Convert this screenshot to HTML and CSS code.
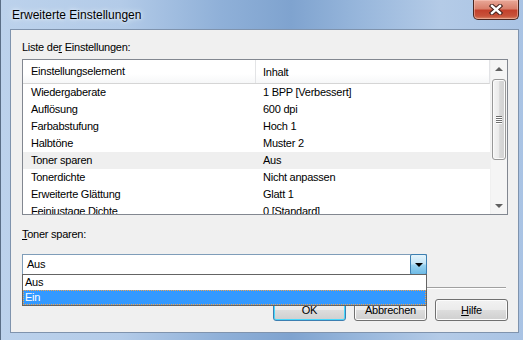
FILE: index.html
```html
<!DOCTYPE html>
<html lang="de">
<head>
<meta charset="utf-8">
<title>Erweiterte Einstellungen</title>
<link rel="stylesheet" href="styles.css">
</head>
<body>
<div class="window">
  <div class="titlebar">
    <span class="title">Erweiterte Einstellungen</span>
    <div class="close">
      <svg width="14" height="11" viewBox="0 0 14 11">
        <path d="M3 2 L11 9 M11 2 L3 9" stroke="#43201a" stroke-width="4.4" stroke-linecap="square" fill="none"/>
        <path d="M3 2 L11 9 M11 2 L3 9" stroke="#ffffff" stroke-width="2.4" stroke-linecap="square" fill="none"/>
      </svg>
    </div>
  </div>
  <div class="client">
    <div class="label">Liste de<u>r</u> Einstellungen:</div>
    <div class="listbox">
      <div class="lv">
        <div class="lv-head">
          <div class="c1">Einstellungselement</div>
          <div class="c2">Inhalt</div>
        </div>
        <div class="lv-body">
          <div class="row"><div class="c1">Wiedergaberate</div><div class="c2">1 BPP [Verbessert]</div></div>
          <div class="row"><div class="c1">Auflösung</div><div class="c2">600 dpi</div></div>
          <div class="row"><div class="c1">Farbabstufung</div><div class="c2">Hoch 1</div></div>
          <div class="row"><div class="c1">Halbtöne</div><div class="c2">Muster 2</div></div>
          <div class="row selected"><div class="c1">Toner sparen</div><div class="c2">Aus</div></div>
          <div class="row"><div class="c1">Tonerdichte</div><div class="c2">Nicht anpassen</div></div>
          <div class="row"><div class="c1">Erweiterte Glättung</div><div class="c2">Glatt 1</div></div>
          <div class="row"><div class="c1">Feinjustage Dichte</div><div class="c2">0 [Standard]</div></div>
        </div>
      </div>
      <div class="vscroll">
        <div class="sb-btn"><span class="tri tri-up"></span></div>
        <div class="sb-track">
          <div class="thumb"><span class="grip"></span><span class="grip"></span><span class="grip"></span><span class="grip"></span></div>
        </div>
        <div class="sb-btn"><span class="tri tri-down"></span></div>
      </div>
    </div>
    <div class="label label2"><u>T</u>oner sparen:</div>
    <div class="combo">
      <div class="combo-text">Aus</div>
      <div class="combo-btn"><span class="tri-combo"></span></div>
      <div class="popup">
        <div class="opt">Aus</div>
        <div class="opt sel">Ein</div>
      </div>
    </div>
    <div class="sep"></div>
    <div class="buttons">
      <div class="btn default">OK</div>
      <div class="btn">Abbrechen</div>
      <div class="btn"><u>H</u>ilfe</div>
    </div>
  </div>
</div>
</body>
</html>
```

FILE: styles.css
```css
* { box-sizing: border-box; }

html, body {
  margin: 0;
  padding: 0;
  background: #c3d7ee;
}

.window {
  width: 523px;
  height: 340px;
  overflow: hidden;
  background:
    linear-gradient(90deg, #bcd2ec 0px, #b3cbe8 120px, #8fb0d8 220px, #7fa3cf 290px, #98b7dc 360px, #b4cbe7 440px, #a9c3e4 523px);
  border-left: 1px solid #5a6e86;
  font-family: "Liberation Sans", Arial, sans-serif;
  font-size: 11px;
  letter-spacing: -0.25px;
  color: #000;
}

.titlebar {
  height: 29px;
  display: flex;
  justify-content: space-between;
  align-items: flex-start;
  padding-left: 11px;
  padding-right: 4px;
}

.title {
  font-size: 12px;
  letter-spacing: 0;
  line-height: 14px;
  margin-top: 8px;
  color: #000;
  text-shadow: 0 0 6px #eaf2fb, 0 0 3px #eaf2fb;
}

.close {
  width: 46px;
  height: 20px;
  border: 1px solid #4a2620;
  border-top: none;
  border-radius: 0 0 5px 5px;
  background: linear-gradient(180deg, #e9a898 0%, #d9806c 45%, #c3412c 55%, #c8533b 85%, #d88a6a 100%);
  box-shadow: inset 0 0 0 1px rgba(255, 210, 200, 0.45);
  display: flex;
  align-items: center;
  justify-content: center;
}

.close svg { display: block; }

.client {
  margin-left: 9px;
  width: 509px;
  height: 304px;
  background: #f0f0f0;
  border: 1px solid #7f93ad;
  padding: 11px 10px 0 11px;
}

.label {
  line-height: 13px;
  height: 13px;
}

.listbox {
  margin-top: 5px;
  height: 156px;
  border: 1px solid #828790;
  background: #fff;
  display: flex;
}

.lv {
  flex: 1;
  display: flex;
  flex-direction: column;
  min-width: 0;
}

.lv-head {
  height: 24px;
  display: flex;
  align-items: center;
  background: linear-gradient(180deg, #ffffff 0%, #ffffff 60%, #f6f7f8 100%);
  border-bottom: 1px solid #d5d5d5;
  border-right: 1px solid #e2e3e6;
}

.lv-head .c1 {
  border-right: 1px solid #e3e4e6;
  height: 23px;
  line-height: 23px;
}

.c1 {
  width: 233px;
  padding-left: 8px;
  white-space: nowrap;
}

.c2 {
  flex: 1;
  padding-left: 7px;
  white-space: nowrap;
}

.lv-body {
  flex: 1;
  overflow: hidden;
}

.row {
  height: 17px;
  line-height: 17px;
  display: flex;
}

.row.selected {
  background: #efefef;
}

.vscroll {
  width: 17px;
  display: flex;
  flex-direction: column;
  background: #f5f5f5;
  border-left: 1px solid #f0f0f0;
}

.sb-btn {
  height: 17px;
  display: flex;
  align-items: center;
  justify-content: center;
}

.tri {
  width: 0;
  height: 0;
  border-left: 4px solid transparent;
  border-right: 4px solid transparent;
}

.tri-up { border-bottom: 4px solid #606060; }
.tri-down { border-top: 4px solid #606060; }

.sb-track {
  flex: 1;
  padding-top: 2px;
  padding-left: 1px;
}

.thumb {
  width: 14px;
  height: 81px;
  border: 1px solid #979797;
  border-radius: 3px;
  background: linear-gradient(90deg, #f4f4f4 0%, #eaeaea 50%, #d8d8d8 55%, #d2d2d2 100%);
  box-shadow: inset 0 0 0 1px #fbfbfb;
  display: flex;
  flex-direction: column;
  align-items: center;
  justify-content: center;
  gap: 1px;
}

.grip {
  width: 6px;
  height: 1px;
  background: #6e6e6e;
  box-shadow: 0 1px 0 #ffffff;
}

.label2 {
  margin-top: 13px;
}

.combo {
  position: relative;
  margin-top: 13px;
  width: 405px;
  height: 21px;
  background: #fff;
  border: 1px solid #7f9db9;
  display: flex;
  align-items: center;
}

.combo-text {
  flex: 1;
  padding-left: 4px;
  line-height: 19px;
}

.combo-btn {
  width: 17px;
  height: 21px;
  margin-top: -1px;
  margin-bottom: -1px;
  margin-right: -1px;
  border: 1px solid #3c7fb1;
  border-radius: 2px;
  background: linear-gradient(180deg, #e5f4fc 0%, #c4e5f6 45%, #98d1ef 55%, #6ebbe6 100%);
  display: flex;
  align-items: center;
  justify-content: center;
}

.tri-combo {
  width: 0;
  height: 0;
  border-left: 4px solid transparent;
  border-right: 4px solid transparent;
  border-top: 4px solid #000;
  margin-top: 1px;
}

.popup {
  position: absolute;
  top: 100%;
  left: -1px;
  width: 405px;
  border: 1px solid #646464;
  background: #fff;
  z-index: 5;
}

.opt {
  height: 15px;
  line-height: 15px;
  padding-left: 2px;
}

.opt.sel {
  background: #3399ff;
  color: #fff;
  outline: 1px dotted #f5a34a;
  outline-offset: -1px;
}

.sep {
  margin-top: 12px;
  margin-right: 2px;
  height: 2px;
  border-top: 1px solid #a0a0a0;
  border-bottom: 1px solid #ffffff;
}

.buttons {
  margin-top: 10px;
  display: flex;
  justify-content: flex-end;
  gap: 8px;
}

.btn {
  width: 73px;
  height: 22px;
  border: 1px solid #707070;
  border-radius: 3px;
  background: linear-gradient(180deg, #f2f2f2 0%, #ebebeb 50%, #dddddd 51%, #cfcfcf 100%);
  box-shadow: inset 0 0 0 1px #fcfcfc;
  text-align: center;
  line-height: 20px;
}

.btn.default {
  border-color: #3c7fb1;
  box-shadow: inset 0 0 0 1px #48d8fb;
}
```
